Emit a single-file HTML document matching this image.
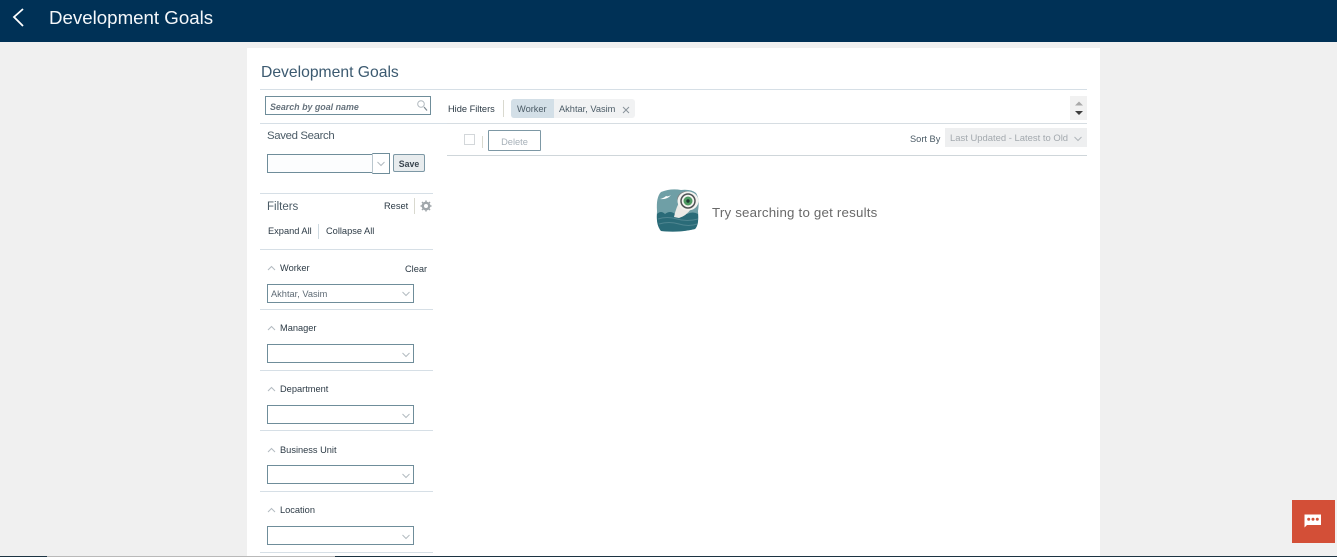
<!DOCTYPE html>
<html><head><meta charset="utf-8"><style>
html,body{margin:0;padding:0}
body{width:1337px;height:557px;overflow:hidden;background:#f0f0f0;position:relative;font-family:"Liberation Sans",sans-serif;color:#333}
.a{position:absolute;white-space:nowrap}
.line{position:absolute;height:1px;background:#d6dfe6}
.t{position:absolute;white-space:nowrap;font-size:9.25px;line-height:12px;color:#2c3a45}
.sel{position:absolute;left:267px;width:145px;height:17px;border:1px solid #6f8d9a;background:#fff}
.ch{position:absolute}
</style></head><body>
<div class="a" style="left:0;top:0;width:1337px;height:42px;background:#003156"></div>
<svg class="a" style="left:11px;top:7px" width="14" height="22"><path d="M12 2 L3 10 L12 19" fill="none" stroke="#fff" stroke-width="1.8"/></svg>
<div class="a" style="left:49px;top:6px;font-size:18.7px;line-height:24px;color:#f4f7fa">Development Goals</div>
<div class="a" style="left:247px;top:48px;width:853px;height:509px;background:#fff"></div>
<div class="a" style="left:261px;top:63px;font-size:15.7px;line-height:20px;color:#3c5a70">Development Goals</div>
<div class="line" style="left:260px;top:89px;width:827px"></div>
<div class="a" style="left:265px;top:96px;width:164px;height:17px;border:1px solid #6f8d9a"></div>
<div class="a" style="left:270px;top:101px;font-size:8.9px;line-height:12px;font-style:italic;font-weight:bold;color:#66727c">Search by goal name</div>
<svg class="a" style="left:416px;top:99px" width="12" height="13"><circle cx="5" cy="5" r="3.3" fill="none" stroke="#b0b8be" stroke-width="1"/><path d="M8 8l3 3.5" stroke="#7d8890" stroke-width="1.2"/></svg>
<div class="line" style="left:260px;top:123px;width:187px"></div>
<div class="t" style="left:267px;top:129px;font-size:11.4px;line-height:14px;color:#4b5b66;letter-spacing:-.35px">Saved Search</div>
<div class="a" style="left:267px;top:154px;width:105px;height:17px;border:1px solid #6f8d9a;background:#fcfdfe"></div>
<div class="a" style="left:372px;top:153px;width:16px;height:19px;border:1px solid #6f8d9a;border-left:1px solid #b9c6cd;background:#fff"></div>
<svg class="ch" style="left:376px;top:161px" width="10" height="6"><path d="M1.5 1l3.500 3.500L8.500 1" fill="none" stroke="#b3bbc1"/></svg>
<div class="a" style="left:393px;top:154px;width:30px;height:16px;border:1px solid #7d98a5;border-radius:2px;background:#e8ecee;font-size:8.8px;line-height:18px;text-align:center;font-weight:bold;color:#3b4650">Save</div>
<div class="line" style="left:260px;top:193px;width:173px"></div>
<div class="t" style="left:267px;top:200px;font-size:11.5px;line-height:14px;color:#4b5b66">Filters</div>
<div class="t" style="left:384px;top:200px">Reset</div>
<div class="a" style="left:414px;top:198px;width:1px;height:16px;background:#d9d9cf"></div>
<svg class="a" style="left:420px;top:200px" width="12" height="12"><circle cx="6" cy="6" r="3.2" fill="none" stroke="#a0a6aa" stroke-width="2.4"/><path d="M6 .5v2M6 9.500v2M.5 6h2M9.500 6h2M2 2l1.500 1.500M8.500 8.500L10 10M10 2L8.500 3.500M2 10l1.500-1.500" stroke="#a0a6aa" stroke-width="1.500"/></svg>
<div class="t" style="left:268px;top:225px">Expand All</div>
<div class="a" style="left:318px;top:224px;width:1px;height:15px;background:#cfdae1"></div>
<div class="t" style="left:326px;top:225px">Collapse All</div>
<div class="line" style="left:260px;top:249px;width:173px"></div>

<svg class="ch" style="left:267px;top:265px" width="9" height="6"><path d="M1 5l3.500-3.500L8 5" fill="none" stroke="#b3bbc1"/></svg>
<div class="t" style="left:280px;top:262px">Worker</div>
<div class="t" style="left:405px;top:263px">Clear</div>
<div class="sel" style="top:284px"></div>
<div class="t" style="left:271px;top:288px;color:#5f6b75">Akhtar, Vasim</div>
<svg class="ch" style="left:401px;top:291px" width="10" height="6"><path d="M1.500 1l3.500 3.500L8.500 1" fill="none" stroke="#b3bbc1"/></svg>
<div class="line" style="left:260px;top:309px;width:173px"></div>

<svg class="ch" style="left:267px;top:325px" width="9" height="6"><path d="M1 5l3.500-3.500L8 5" fill="none" stroke="#b3bbc1"/></svg>
<div class="t" style="left:280px;top:322px">Manager</div>
<div class="sel" style="top:344px"></div>
<svg class="ch" style="left:401px;top:352px" width="10" height="6"><path d="M1.500 1l3.500 3.500L8.500 1" fill="none" stroke="#b3bbc1"/></svg>
<div class="line" style="left:260px;top:370px;width:173px"></div>

<svg class="ch" style="left:267px;top:386px" width="9" height="6"><path d="M1 5l3.500-3.500L8 5" fill="none" stroke="#b3bbc1"/></svg>
<div class="t" style="left:280px;top:383px">Department</div>
<div class="sel" style="top:405px"></div>
<svg class="ch" style="left:401px;top:413px" width="10" height="6"><path d="M1.500 1l3.500 3.500L8.500 1" fill="none" stroke="#b3bbc1"/></svg>
<div class="line" style="left:260px;top:430px;width:173px"></div>

<svg class="ch" style="left:267px;top:447px" width="9" height="6"><path d="M1 5l3.500-3.500L8 5" fill="none" stroke="#b3bbc1"/></svg>
<div class="t" style="left:280px;top:444px">Business Unit</div>
<div class="sel" style="top:465px"></div>
<svg class="ch" style="left:401px;top:473px" width="10" height="6"><path d="M1.500 1l3.500 3.500L8.500 1" fill="none" stroke="#b3bbc1"/></svg>
<div class="line" style="left:260px;top:491px;width:173px"></div>

<svg class="ch" style="left:267px;top:507px" width="9" height="6"><path d="M1 5l3.500-3.500L8 5" fill="none" stroke="#b3bbc1"/></svg>
<div class="t" style="left:280px;top:504px">Location</div>
<div class="sel" style="top:526px"></div>
<svg class="ch" style="left:401px;top:534px" width="10" height="6"><path d="M1.500 1l3.500 3.500L8.500 1" fill="none" stroke="#b3bbc1"/></svg>
<div class="line" style="left:260px;top:552px;width:173px"></div>

<div class="t" style="left:448px;top:103px">Hide Filters</div>
<div class="a" style="left:503px;top:100px;width:1px;height:17px;background:#d9d9cf"></div>
<div class="a" style="left:511px;top:99px;width:124px;height:19px;background:#f1f2f3;border-radius:3px"></div>
<div class="a" style="left:511px;top:99px;width:43px;height:19px;background:#d3dfe7;border-radius:3px 0 0 3px"></div>
<div class="t" style="left:517px;top:103px;color:#4b5b66">Worker</div>
<div class="t" style="left:559px;top:103px;color:#4b5b66">Akhtar, Vasim</div>
<svg class="a" style="left:622px;top:106px" width="8" height="8"><path d="M1 1l6 6M7 1l-6 6" stroke="#8a949b"/></svg>
<div class="a" style="left:1070px;top:96px;width:17px;height:24px;background:#f1f1f1"></div>
<svg class="a" style="left:1074px;top:99px" width="10" height="18"><path d="M1 6.500l4-4 4 4z" fill="#a9a9a9"/><path d="M1 12l4 4 4-4z" fill="#3d3d3d"/></svg>
<div class="line" style="left:447px;top:123px;width:640px;background:#d6dde2"></div>
<div class="a" style="left:464px;top:134px;width:9px;height:9px;border:1px solid #d3d7da"></div>
<div class="a" style="left:482px;top:136px;width:1px;height:12px;background:#d9d9cf"></div>
<div class="a" style="left:488px;top:130px;width:51px;height:19px;border:1px solid #7d98a5;border-radius:1px;font-size:9.3px;line-height:22px;text-align:center;color:#a6b0b8">Delete</div>
<div class="t" style="left:910px;top:133px;color:#4b5b66">Sort By</div>
<div class="a" style="left:945px;top:128px;width:142px;height:19px;background:#eeeff0"></div>
<div class="t" style="left:950px;top:133px;color:#a3a9ae;font-size:9.45px">Last Updated - Latest to Old</div>
<svg class="ch" style="left:1073px;top:136px" width="10" height="6"><path d="M1.500 1l3.500 3.500L8.500 1" fill="none" stroke="#b0b6ba"/></svg>
<div class="line" style="left:447px;top:155px;width:640px;background:#cfd6da"></div>

<svg class="a" style="left:655px;top:187px" width="45" height="46" viewBox="0 0 45 46">
<path d="M6 5 Q16 1 26 3 Q36 2 41 6 Q45 12 43 24 Q44 38 40 42 Q24 46 6 44 Q1 38 2 24 Q1 10 6 5z" fill="#6f9fa6"/>
<path d="M2 27 Q6 23 10 27 Q15 23 20 27 Q28 24 32 27 Q38 24 43 27 Q44 38 40 42 Q24 46 6 44 Q1 38 2 27z" fill="#2a6b78"/>
<path d="M3 32 Q12 29 22 32 T43 32 M4 37 Q14 34 24 37 T42 37" fill="none" stroke="#4f8590" stroke-width="1"/>
<path d="M5 12 Q9 11 11 9 Q13 10 16 8 Q12 13 5 12z" fill="#fff"/>
<path d="M19 30 Q21 20 26 12 L36 22 Q31 29 24 31z" fill="#eceae6"/>
<path d="M22 12 Q23 5 32 4 L28 20 Q23 18 22 12z" fill="#7f8486"/>
<ellipse cx="33" cy="14" rx="10.500" ry="9.500" fill="#f4f3f0"/>
<circle cx="33" cy="14" r="7" fill="none" stroke="#4d5153" stroke-width="1.500"/>
<circle cx="33" cy="14" r="4.500" fill="#4e9a62"/>
<circle cx="33" cy="14" r="1.700" fill="#1e3a33"/>
</svg>
<div class="a" style="left:712px;top:204px;font-size:13.3px;line-height:17px;color:#696969;letter-spacing:.2px">Try searching to get results</div>

<div class="a" style="left:1292px;top:500px;width:43px;height:43px;background:#d34f37"></div>
<svg class="a" style="left:1304px;top:514px" width="20" height="16"><path d="M.5.500h16.500v10.500H3l-2.500 2.500z" fill="#fff"/><circle cx="4.700" cy="5.300" r="1.500" fill="#d34f37"/><circle cx="9" cy="5.300" r="1.500" fill="#d34f37"/><circle cx="13.300" cy="5.300" r="1.500" fill="#d34f37"/></svg>

<div class="a" style="left:0;top:556px;width:1337px;height:1px;background:#1c3342"></div>
<div class="a" style="left:47px;top:556px;width:288px;height:1px;background:#b9b9b9"></div>
</body></html>
